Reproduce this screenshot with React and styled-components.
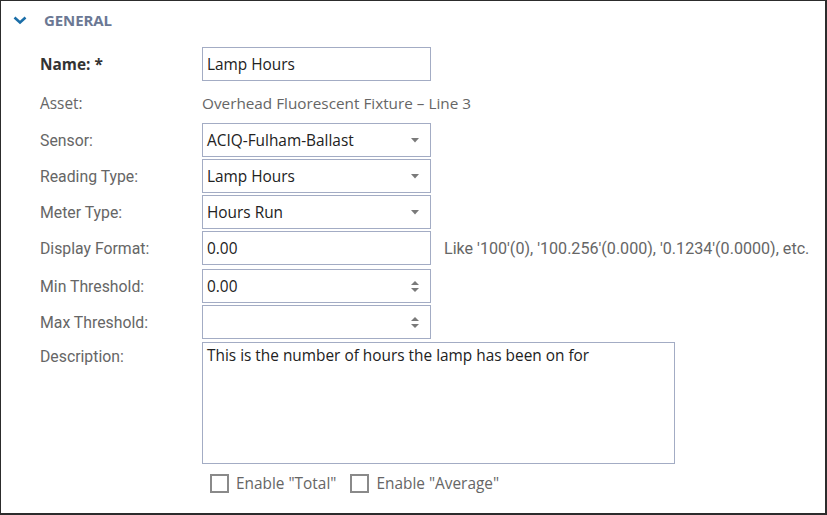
import styled, { createGlobalStyle } from 'styled-components';

const GlobalStyle = createGlobalStyle`
  body {
    margin: 0;
    background: #fff;
  }
`;

function App() {
  return (
    <>
      <GlobalStyle />
      <Frame>
        <SectionHeader>
          <Chevron viewBox="0 0 14 9">
            <path d="M1.5 1.5 L7 6.5 L12.5 1.5" fill="none" stroke="#1b6ea8" strokeWidth="2.6" />
          </Chevron>
          <SectionTitle>GENERAL</SectionTitle>
        </SectionHeader>

        <Row $top={12}>
          <Label $strong>Name: *</Label>
          <Field>
            <TextBox defaultValue="Lamp Hours" />
          </Field>
        </Row>

        <Row $top={5}>
          <Label $segoe>Asset:</Label>
          <StaticValue>Overhead Fluorescent Fixture – Line 3</StaticValue>
        </Row>

        <Row $top={3}>
          <Label>Sensor:</Label>
          <Dropdown value="ACIQ-Fulham-Ballast" />
        </Row>
        <Row $top={2}>
          <Label>Reading Type:</Label>
          <Dropdown value="Lamp Hours" />
        </Row>
        <Row $top={2}>
          <Label>Meter Type:</Label>
          <Dropdown value="Hours Run" />
        </Row>
        <Row $top={2}>
          <Label>Display Format:</Label>
          <Field>
            <TextBox defaultValue="0.00" />
          </Field>
          <Hint>Like '100'(0), '100.256'(0.000), '0.1234'(0.0000), etc.</Hint>
        </Row>
        <Row $top={4}>
          <Label>Min Threshold:</Label>
          <NumberBox value="0.00" />
        </Row>
        <Row $top={2}>
          <Label>Max Threshold:</Label>
          <NumberBox value="" />
        </Row>
        <Row $top={3} $align="flex-start">
          <Label $pad={5}>Description:</Label>
          <TextArea defaultValue="This is the number of hours the lamp has been on for" />
        </Row>

        <CheckRow>
          <CheckOption>
            <CheckBox />
            <span>Enable "Total"</span>
          </CheckOption>
          <CheckOption>
            <CheckBox />
            <span>Enable "Average"</span>
          </CheckOption>
        </CheckRow>
      </Frame>
    </>
  );
}

function Dropdown({ value }) {
  return (
    <BoxShell>
      <ShellText>{value}</ShellText>
      <Caret viewBox="0 0 8 5">
        <path d="M0 0 H8 L4 4.5 Z" fill="#7a7a7a" />
      </Caret>
    </BoxShell>
  );
}

function NumberBox({ value }) {
  return (
    <BoxShell>
      <ShellText>{value}</ShellText>
      <Spinner viewBox="0 0 8 11">
        <path d="M0 4 L4 0 L8 4 Z" fill="#7a7a7a" />
        <path d="M0 7 L4 11 L8 7 Z" fill="#7a7a7a" />
      </Spinner>
    </BoxShell>
  );
}

export default App;

const Frame = styled.div`
  box-sizing: border-box;
  width: 827px;
  height: 515px;
  border-style: solid;
  border-color: #2c2c2c;
  border-width: 1px 2px 2px 1px;
  overflow: hidden;
`;

const SectionHeader = styled.div`
  display: flex;
  align-items: center;
  height: 30px;
  padding: 4px 0 0 12px;
`;

const Chevron = styled.svg`
  width: 14px;
  height: 9px;
  margin-right: 17px;
`;

const SectionTitle = styled.span`
  font-family: 'Open Sans', sans-serif;
  font-weight: 700;
  font-size: 15px;
  color: #6b7894;
  letter-spacing: -0.1px;
`;

const Row = styled.div`
  display: flex;
  align-items: ${p => p.$align || 'center'};
  margin-top: ${p => p.$top}px;
  min-height: 34px;
`;

const Label = styled.div`
  width: 162px;
  padding-left: 39px;
  padding-top: ${p => p.$pad || 0}px;
  flex-shrink: 0;
  font-family: ${p => (p.$strong || p.$segoe ? "'Open Sans'" : 'Roboto')}, sans-serif;
  font-size: ${p => (p.$strong || p.$segoe ? '15.4px' : '15.8px')};
  font-weight: ${p => (p.$strong ? 700 : 400)};
  color: ${p => (p.$strong ? '#333' : '#666')};
`;

const Field = styled.div`
  display: flex;
`;

const inputBase = `
  box-sizing: border-box;
  border: 1px solid #a3acc4;
  background: #fff;
  font-family: 'Open Sans', sans-serif;
  font-size: 15.4px;
  color: #222;
  outline: none;
`;

const TextBox = styled.input`
  ${inputBase}
  width: 229px;
  height: 34px;
  padding: 0 4px;
`;

const StaticValue = styled.div`
  font-family: 'Open Sans', sans-serif;
  font-size: 15.3px;
  color: #666;
`;

const BoxShell = styled.div`
  ${inputBase}
  display: flex;
  align-items: center;
  justify-content: space-between;
  width: 229px;
  height: 34px;
  padding: 0 10px 0 4px;
`;

const ShellText = styled.span`
  white-space: nowrap;
`;

const Caret = styled.svg`
  width: 8px;
  height: 5px;
  margin-right: 1px;
`;

const Spinner = styled.svg`
  width: 8px;
  height: 11px;
  margin-right: 1px;
`;

const Hint = styled.div`
  margin-left: 13px;
  font-family: Roboto, sans-serif;
  font-size: 16.1px;
  color: #666;
  white-space: nowrap;
`;

const TextArea = styled.textarea`
  ${inputBase}
  width: 473px;
  height: 122px;
  padding: 3px 4px;
  resize: none;
  line-height: 1.3;
`;

const CheckRow = styled.div`
  display: flex;
  gap: 14px;
  margin-top: 9px;
  padding-left: 209px;
`;

const CheckOption = styled.label`
  display: flex;
  align-items: center;
  gap: 7px;
  font-family: 'Open Sans', sans-serif;
  font-size: 15.4px;
  color: #666;
`;

const CheckBox = styled.span`
  box-sizing: border-box;
  display: inline-block;
  width: 19px;
  height: 19px;
  border: 2px solid #8a8a8a;
  background: #fff;
`;
